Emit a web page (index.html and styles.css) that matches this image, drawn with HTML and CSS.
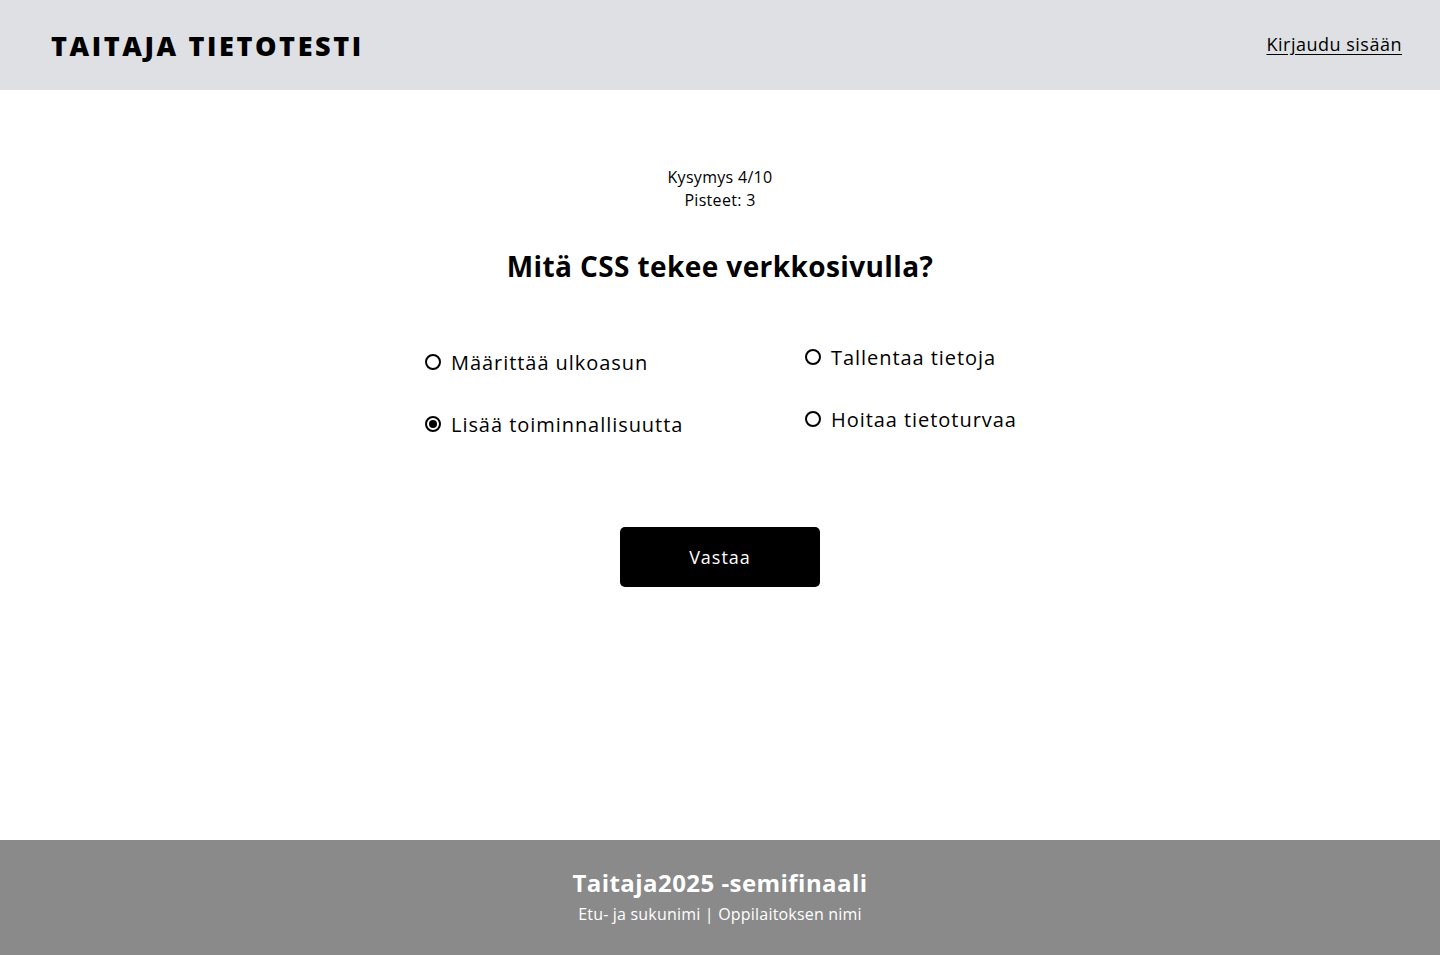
FILE: index.html
```html
<!DOCTYPE html>
<html lang="fi">
<head>
<meta charset="utf-8">
<title>Taitaja tietotesti</title>
<link rel="stylesheet" href="styles.css">
</head>
<body>
<header class="site-header">
  <div class="brand">TAITAJA TIETOTESTI</div>
  <a class="login" href="#">Kirjaudu sisään</a>
</header>
<main class="quiz">
  <div class="status">
    <div>Kysymys 4/10</div>
    <div>Pisteet: 3</div>
  </div>
  <h1 class="question">Mitä CSS tekee verkkosivulla?</h1>
  <div class="options">
    <div class="col col-left">
      <label class="option"><span class="radio"></span>Määrittää ulkoasun</label>
      <label class="option"><span class="radio checked"></span>Lisää toiminnallisuutta</label>
    </div>
    <div class="col col-right">
      <label class="option"><span class="radio"></span>Tallentaa tietoja</label>
      <label class="option"><span class="radio"></span>Hoitaa tietoturvaa</label>
    </div>
  </div>
  <button class="answer" type="button">Vastaa</button>
</main>
<footer class="site-footer">
  <div class="footer-title">Taitaja2025 -semifinaali</div>
  <div class="footer-sub">Etu- ja sukunimi | Oppilaitoksen nimi</div>
</footer>
</body>
</html>
```
FILE: styles.css
```css
* { box-sizing: border-box; }
html, body { margin: 0; padding: 0; }
body {
  font-family: "Open Sans", "DejaVu Sans", sans-serif;
  color: #000;
  background: #fff;
  height: 955px;
  display: flex;
  flex-direction: column;
}
.site-header {
  height: 90px;
  background: #dfe0e3;
  display: flex;
  align-items: center;
  justify-content: space-between;
  padding: 0 38px 0 51px;
  flex: none;
}
.brand {
  font-size: 27px;
  font-weight: 800;
  letter-spacing: 2.6px;
  line-height: 32px;
  margin-top: 2px;
}
.login {
  color: #000;
  font-size: 18px;
  letter-spacing: 0.5px;
  text-decoration: underline;
  text-underline-offset: 3px;
  margin-top: -2px;
}
.quiz {
  flex: 1;
  display: flex;
  flex-direction: column;
  align-items: center;
  padding-top: 76px;
}
.status {
  font-size: 16px;
  letter-spacing: 0.3px;
  line-height: 23px;
  text-align: center;
}
.question {
  margin: 36px 0 0;
  font-size: 28px;
  letter-spacing: 0.4px;
  line-height: 36px;
  font-weight: 700;
}
.options {
  margin-top: 58px;
  display: grid;
  grid-template-columns: 380px 216px;
  justify-content: center;
  transform: translateX(3px);
}
.col {
  display: flex;
  flex-direction: column;
  gap: 32px;
}
.col-left { padding-top: 5px; }
.option {
  display: flex;
  align-items: center;
  height: 30px;
  font-size: 20px;
  letter-spacing: 0.95px;
  white-space: nowrap;
}
.radio {
  width: 16px;
  height: 16px;
  border: 2px solid #000;
  border-radius: 50%;
  margin-right: 10px;
  display: inline-flex;
  align-items: center;
  justify-content: center;
  flex: none;
}
.radio.checked::after {
  content: "";
  width: 8px;
  height: 8px;
  border-radius: 50%;
  background: #000;
}
.answer {
  margin-top: 88px;
  width: 200px;
  height: 60px;
  background: #000;
  color: #fff;
  border: none;
  border-radius: 5px;
  font-family: inherit;
  font-size: 18px;
  letter-spacing: 1px;
}
.site-footer {
  height: 115px;
  flex: none;
  background: #8a8a8a;
  color: #fff;
  text-align: center;
  padding-top: 27px;
}
.footer-title {
  font-size: 24px;
  letter-spacing: 0.45px;
  line-height: 32px;
  font-weight: 700;
}
.footer-sub {
  margin-top: 4px;
  font-size: 16px;
  letter-spacing: 0.2px;
  line-height: 22px;
}
```
